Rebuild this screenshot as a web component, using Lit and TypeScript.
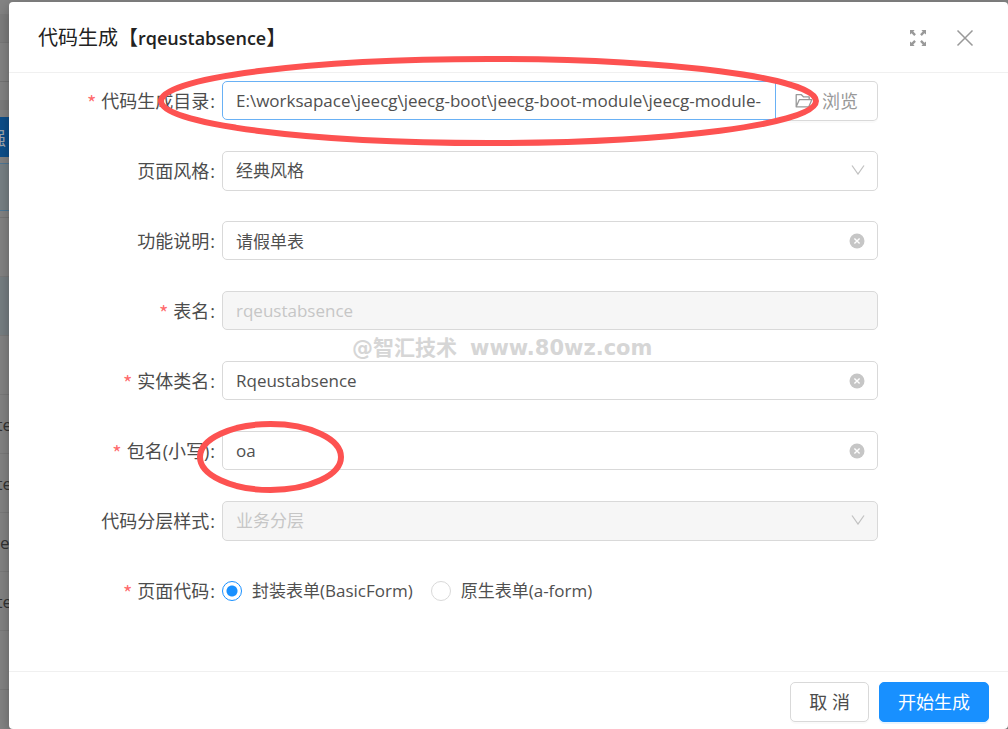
import { LitElement, html, css, svg } from "lit";
import { customElement, property, state } from "lit/decorators.js";

const chevron = html`<svg class="chevron" viewBox="0 0 14 10" aria-hidden="true">
  <path d="M1 .5 7 9 13 .5" fill="none" stroke="currentColor" stroke-width="1.3" />
</svg>`;

const clearIcon = html`<svg viewBox="0 0 16 16" aria-hidden="true">
  <circle cx="8" cy="8" r="7.5" fill="currentColor" />
  <path d="M5.4 5.4 10.6 10.6M10.6 5.4 5.4 10.6" stroke="#fff" stroke-width="1.4" />
</svg>`;

const folderIcon = html`<svg class="folder" viewBox="0 0 18 18" aria-hidden="true">
  <path
    d="M1.2 14.8V2.7h5.2l2 2.1h5.8v2.9M1.2 14.8h12.6l3-7.1H4.3z"
    fill="none"
    stroke="currentColor"
    stroke-width="1.3"
    stroke-linejoin="round"
  />
</svg>`;

const arrow = (angle: number) => svg`<g transform="rotate(${angle} 9 9)">
  <path d="M1 1h4.6L4.3 2.6 6.9 5.2 6 6.2 5.2 6.9 2.6 4.3 1 5.6z" fill="currentColor" />
</g>`;

const expandIcon = html`<svg viewBox="0 0 18 18" aria-hidden="true">${[0, 90, 180, 270].map(arrow)}</svg>`;

const closeIcon = html`<svg viewBox="0 0 18 18" aria-hidden="true">
  <path d="M1.5 1.5 16.5 16.5M16.5 1.5 1.5 16.5" stroke="currentColor" stroke-width="1.5" />
</svg>`;

@customElement("page-backdrop")
export class PageBackdrop extends LitElement {
  static styles = css`
    :host {
      display: block;
      background: #848484;
      color: #333;
      font: 17px/20px "Open Sans", "Noto Sans CJK SC", sans-serif;
      overflow: hidden;
    }
    .strip { box-sizing: border-box; width: 12px; overflow: hidden; }
    .bar { height: 14px; }
    .tabs { height: 29px; background: #7e7e7e; border-bottom: 1px solid #787878; }
    .nav { height: 39px; border-bottom: 1px solid #747474; }
    .pad { height: 18px; }
    .gap { height: 10px; background: #7c7c7c; }
    .tools { height: 63px; padding-top: 7px; }
    .action {
      display: flex;
      justify-content: flex-end;
      width: 12px;
      height: 40px;
      padding: 0 6px 0 0;
      border: 0;
      background: #0d4f8b;
      color: #a0a6ab;
      font: 18px/40px "Noto Sans CJK SC", sans-serif;
      overflow: hidden;
    }
    .info { height: 48px; margin-top: -10px; background: #788286; border: 1px solid #4f7896; border-width: 1px 0; }
    .head { height: 7px; border-bottom: 1px solid #777; }
    .row {
      display: flex;
      justify-content: flex-end;
      height: 59px;
      padding-top: 20px;
      border-bottom: 1px solid #7a7a7a;
      white-space: nowrap;
    }
    .row.start { justify-content: flex-start; }
    .row.picked { background: #777f83; }
  `;

  render() {
    const rows = ["", "picked", "", "te", "te", "es", "te", ""];
    return html`
      <div class="strip bar"></div>
      <div class="strip tabs"></div>
      <div class="strip nav"></div>
      <div class="strip pad"></div>
      <div class="strip gap"></div>
      <div class="strip tools"><button class="action" type="button" tabindex="-1"><span>强</span></button></div>
      <div class="strip info"></div>
      <div class="strip head"></div>
      ${rows.map((text) =>
        text === "picked"
          ? html`<div class="strip row picked"></div>`
          : html`<div class="strip row ${text === "es" ? "start" : ""}"><span>${text}</span></div>`
      )}
    `;
  }
}

@customElement("form-row")
export class FormRow extends LitElement {
  @property() label = "";
  @property({ type: Boolean }) required = false;
  @property() kind = "text";
  @property() value = "";
  @property({ type: Boolean }) disabled = false;
  @property({ attribute: false }) options: string[] = [];
  @state() private picked = 0;

  static styles = css`
    :host { display: block; }
    * { box-sizing: border-box; }
    .row {
      display: grid;
      grid-template-columns: minmax(0, 213fr) minmax(0, 656fr) minmax(0, 130fr);
      height: 40px;
      align-items: start;
    }
    .label {
      display: flex;
      justify-content: flex-end;
      gap: 5px;
      padding-right: 7px;
      color: #4c4c4c;
      font-size: 18px;
      line-height: 40px;
      white-space: nowrap;
    }
    .colon { margin-left: 1px; }
    .star { color: #ff6b6d; font-family: "Noto Sans CJK SC", sans-serif; font-size: 20px; line-height: 44px; height: 40px; }
    .field { position: relative; display: flex; min-width: 0; }
    .box {
      flex: 1;
      min-width: 0;
      width: 100%;
      height: 39px;
      margin: 0;
      padding: 0 13px;
      border: 1px solid #d9d9d9;
      border-radius: 5px;
      background: #fff;
      color: #505050;
      font: inherit;
      outline: none;
      appearance: none;
      opacity: 1;
    }
    select.box { height: 40px; }
    .box:disabled { background: #f6f6f6; color: #c6c6c6; }
    .clearable { padding-right: 40px; }
    .active { border-color: #69b1f5; border-radius: 5px 0 0 5px; }
    .chevron {
      position: absolute;
      right: 13px;
      top: 14px;
      width: 14px;
      height: 10px;
      color: #c2c2c2;
      pointer-events: none;
    }
    .clear {
      position: absolute;
      right: 13px;
      top: 12px;
      width: 16px;
      height: 16px;
      padding: 0;
      border: 0;
      background: none;
      color: #c6c6c6;
      cursor: pointer;
    }
    .clear svg { display: block; width: 16px; height: 16px; }
    .browse {
      display: flex;
      align-items: center;
      gap: 9px;
      height: 40px;
      padding: 0 19px;
      border: 1px solid #d9d9d9;
      border-left: 0;
      border-radius: 0 5px 5px 0;
      background: #fff;
      color: #999;
      font: inherit;
      font-size: 18px;
      box-shadow: 0 2px 0 rgba(0, 0, 0, 0.02);
      cursor: pointer;
    }
    .folder { width: 18px; height: 18px; }
    .radios { display: flex; gap: 18px; }
    .radio { display: flex; align-items: center; gap: 10px; color: #505050; line-height: 40px; white-space: nowrap; }
    .dot {
      width: 20px;
      height: 20px;
      margin: 0;
      border: 1px solid #d9d9d9;
      border-radius: 50%;
      background: #fff;
      appearance: none;
    }
    .dot:checked { border-color: #1890ff; background: radial-gradient(circle, #1890ff 0 5px, #fff 6px); }
  `;

  private control() {
    switch (this.kind) {
      case "path":
        return html`<div class="field">
          <input class="box active" id="control" .value=${this.value} />
          <button class="browse" type="button">${folderIcon}浏览</button>
        </div>`;
      case "select":
        return html`<div class="field">
          <select class="box" id="control" ?disabled=${this.disabled}>
            <option>${this.value}</option>
          </select>
          ${chevron}
        </div>`;
      case "radio":
        return html`<div class="radios" role="radiogroup" aria-labelledby="label">
          ${this.options.map(
            (text, i) => html`<label class="radio">
              <input
                class="dot"
                type="radio"
                name="choice"
                .checked=${this.picked === i}
                @change=${() => (this.picked = i)}
              />${text}
            </label>`
          )}
        </div>`;
      default:
        return html`<div class="field">
          <input class="box clearable" id="control" .value=${this.value} ?disabled=${this.disabled} />
          ${this.disabled
            ? null
            : html`<button class="clear" type="button" aria-label="清除" @click=${() => (this.value = "")}>
                ${clearIcon}
              </button>`}
        </div>`;
    }
  }

  render() {
    const content = html`${this.required ? html`<span class="star">*</span>` : null}
      <span>${this.label}<span class="colon">:</span></span>`;
    return html`<div class="row">
      ${this.kind === "radio"
        ? html`<span class="label" id="label">${content}</span>`
        : html`<label class="label" for="control">${content}</label>`}
      ${this.control()}
    </div>`;
  }
}

@customElement("app-root")
export class AppRoot extends LitElement {
  static styles = css`
    :host {
      display: grid;
      min-height: 100vh;
      overflow: hidden;
      font: 17px/24px "Open Sans", "Noto Sans CJK SC", sans-serif;
    }
    * { box-sizing: border-box; }
    page-backdrop, .modal { grid-area: 1 / 1; }
    page-backdrop { height: 100vh; }
    .modal {
      display: flex;
      flex-direction: column;
      margin: 2px 0 0 9px;
      background: #fff;
      border-radius: 4px;
      box-shadow: 0 4px 14px rgba(0, 0, 0, 0.3);
    }
    .header {
      display: flex;
      align-items: center;
      height: 71px;
      padding: 2px 34px 0 29px;
      border-bottom: 1px solid #f0f0f0;
    }
    .title { flex: 1; margin: 0; color: #222; font-size: 20px; line-height: 28px; font-weight: 400; }
    .name { font-size: 18px; font-weight: 600; }
    .tools { display: flex; gap: 29px; }
    .tool { width: 18px; height: 18px; padding: 0; border: 0; background: none; color: #999; cursor: pointer; }
    .tool svg { display: block; width: 18px; height: 18px; }
    .form { position: relative; flex: 1; display: flex; flex-direction: column; gap: 30px; padding: 8px 0 58px; }
    .marks { position: absolute; left: 0; top: -20px; width: 900px; height: 460px; pointer-events: none; }
    .watermark {
      position: absolute;
      left: 343px;
      top: 261px;
      display: flex;
      gap: 13px;
      color: #d6d6d6;
      font: bold 21px/28px "DejaVu Sans", "Noto Sans CJK SC", sans-serif;
      white-space: nowrap;
      pointer-events: none;
    }
    .footer {
      display: flex;
      justify-content: flex-end;
      gap: 10px;
      padding: 10px 19px 7px;
      border-top: 1px solid #f0f0f0;
    }
    .btn {
      height: 40px;
      padding: 0 18px;
      border: 1px solid #d9d9d9;
      border-radius: 5px;
      background: #fff;
      color: #4c4c4c;
      font: inherit;
      font-size: 18px;
      box-shadow: 0 2px 0 rgba(0, 0, 0, 0.02);
      cursor: pointer;
    }
    .primary { border-color: #1890ff; background: #1890ff; color: #fff; box-shadow: 0 2px 0 rgba(24, 144, 255, 0.1); }
  `;

  render() {
    return html`
      <page-backdrop aria-hidden="true"></page-backdrop>
      <section class="modal" role="dialog" aria-labelledby="title">
        <header class="header">
          <h1 class="title" id="title">代码生成【<span class="name">rqeustabsence</span>】</h1>
          <div class="tools">
            <button class="tool" type="button" aria-label="全屏">${expandIcon}</button>
            <button class="tool" type="button" aria-label="关闭">${closeIcon}</button>
          </div>
        </header>
        <form class="form">
          <form-row
            label="代码生成目录"
            required
            kind="path"
            value="E:\\worksapace\\jeecg\\jeecg-boot\\jeecg-boot-module\\jeecg-module-"
          ></form-row>
          <form-row label="页面风格" kind="select" value="经典风格"></form-row>
          <form-row label="功能说明" value="请假单表"></form-row>
          <form-row label="表名" required value="rqeustabsence" disabled></form-row>
          <form-row label="实体类名" required value="Rqeustabsence"></form-row>
          <form-row label="包名(小写)" required value="oa"></form-row>
          <form-row label="代码分层样式" kind="select" value="业务分层" disabled></form-row>
          <form-row
            label="页面代码"
            required
            kind="radio"
            .options=${["封装表单(BasicForm)", "原生表单(a-form)"]}
          ></form-row>
          <div class="watermark"><span>@智汇技术</span><span>www.80wz.com</span></div>
          <svg class="marks" viewBox="0 0 900 460" aria-hidden="true">
            <g fill="none" stroke="#fd5251" stroke-width="6">
              <ellipse cx="479.5" cy="48" rx="327.5" ry="42" />
              <ellipse cx="261.5" cy="404" rx="70.5" ry="33" />
            </g>
          </svg>
        </form>
        <footer class="footer">
          <button class="btn" type="button">取 消</button>
          <button class="btn primary" type="button">开始生成</button>
        </footer>
      </section>
    `;
  }
}
